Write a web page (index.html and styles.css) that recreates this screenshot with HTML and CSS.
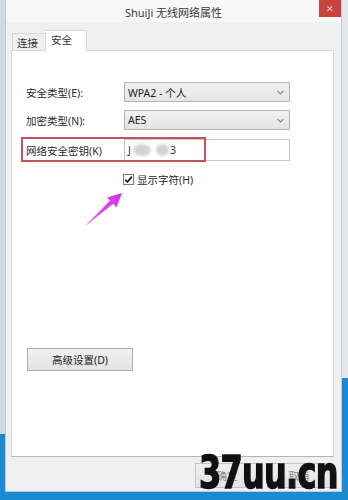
FILE: index.html
```html
<!DOCTYPE html>
<html lang="zh-CN">
<head>
    <meta charset="UTF-8">
    <meta name="viewport" content="width=device-width, initial-scale=1.0">
    <title>ShuiJi 无线网络属性</title>
    <link rel="stylesheet" href="styles.css">
</head>
<body>
    <div class="desktop">
        <div class="window">
            <div class="titlebar">
                <span class="title">ShuiJi 无线网络属性</span>
                <span class="close">&#x2715;</span>
            </div>
            <div class="tabs">
                <span class="tab">连接</span>
                <span class="tab active">安全</span>
            </div>
            <div class="panel">
                <div class="row">
                    <span class="label">安全类型(E):</span>
                    <div class="select">
                        <span>WPA2 - 个人</span>
                        <svg class="chevron" width="7" height="5" viewBox="0 0 7 5"><path d="M0.5 0.8 L3.5 3.8 L6.5 0.8" fill="none" stroke="#8a8a8a" stroke-width="1.2"/></svg>
                    </div>
                </div>
                <div class="row second">
                    <span class="label">加密类型(N):</span>
                    <div class="select">
                        <span>AES</span>
                        <svg class="chevron" width="7" height="5" viewBox="0 0 7 5"><path d="M0.5 0.8 L3.5 3.8 L6.5 0.8" fill="none" stroke="#8a8a8a" stroke-width="1.2"/></svg>
                    </div>
                </div>
                <div class="row key">
                    <span class="label">网络安全密钥(K)</span>
                    <div class="input">J<span class="blob"></span><span class="blob small"></span>3</div>
                    <span class="mark"></span>
                </div>
                <div class="check-row">
                    <span class="checkbox">
                        <svg width="9" height="9" viewBox="0 0 9 9"><path d="M1.2 4.6 L3.5 7 L7.8 1.6" fill="none" stroke="#1e1e1e" stroke-width="1.8"/></svg>
                    </span>
                    <span>显示字符(H)</span>
                </div>
                <button class="btn advanced">高级设置(D)</button>
            </div>
            <div class="footer">
                <button class="btn ok">确定</button>
                <button class="btn cancel">取消</button>
            </div>
        </div>
        <svg class="arrow" width="46" height="44" viewBox="80 188 46 44">
            <defs>
                <linearGradient id="pink" x1="0" y1="1" x2="1" y2="0">
                    <stop offset="0" stop-color="#e36cf2"/>
                    <stop offset="1" stop-color="#cf2fe3"/>
                </linearGradient>
            </defs>
            <polygon points="84,227 110,200.5 107,197.5 122,193 116.5,207.5 113.3,203.8" fill="url(#pink)"/>
        </svg>
        <div class="watermark">37uu.cn</div>
    </div>
</body>
</html>
```

FILE: styles.css
```css
* {
    box-sizing: border-box;
}

body {
    margin: 0;
    padding: 0;
    overflow: hidden;
    font-family: "Noto Sans", "Noto Sans CJK SC", sans-serif;
    font-size: 10.5px;
    color: #222;
}

.desktop {
    position: relative;
    width: 348px;
    height: 500px;
    background:
        linear-gradient(#d6d8d9, #d6d8d9) left top / 5px 434px no-repeat,
        linear-gradient(#e4e6e7, #e4e6e7) right top / 6px 378px no-repeat,
        #1b8ad2;
    padding-left: 5px;
}

.window {
    width: 337px;
    height: 492px;
    background: #f0f0f0;
    border: 1px solid #b7cde0;
    border-top: 0;
    display: flex;
    flex-direction: column;
}

.titlebar {
    height: 22px;
    background: #f8f8f8;
    display: grid;
    grid-template-columns: 22px 1fr 22px;
}

.title {
    grid-column: 2;
    text-align: center;
    line-height: 25px;
    font-size: 11px;
    color: #3a3a3a;
}

.close {
    grid-column: 3;
    height: 17px;
    background: #c9433d;
    color: #f4d6d4;
    font-size: 9px;
    text-align: center;
    line-height: 17px;
}

.tabs {
    height: 20px;
    margin-top: 8px;
    padding-left: 6px;
    display: flex;
    align-items: flex-end;
}

.tab {
    height: 17px;
    padding: 0 7px 0 4px;
    border: 1px solid #d9d9d9;
    border-bottom: 0;
    background: #f0f0f0;
    line-height: 18px;
    color: #333;
}

.tab.active {
    position: relative;
    z-index: 1;
    height: 21px;
    margin-bottom: -1px;
    padding: 0 14px 0 5px;
    background: #fff;
    border-left: 0;
    line-height: 18px;
}

.panel {
    height: 407px;
    margin: 0 7px 0 5px;
    background: #fff;
    border: 1px solid #d9d9d9;
    border-bottom-color: #b4b4b4;
    padding: 31px 0 0 14px;
    display: flex;
    flex-direction: column;
    align-items: flex-start;
}

.row {
    display: flex;
    align-items: center;
    height: 20px;
}

.row.second {
    margin-top: 8px;
}

.row.key {
    position: relative;
    height: 22px;
    margin-top: 9px;
}

.label {
    width: 98px;
    color: #2a2a2a;
}

.select {
    width: 166px;
    height: 20px;
    border: 1px solid #b3b3b3;
    background: linear-gradient(#f1f1f1, #e4e4e4);
    display: flex;
    align-items: center;
    justify-content: space-between;
    padding: 0 5px 0 3px;
    color: #222;
}

.chevron {
    display: block;
}

.input {
    width: 166px;
    height: 22px;
    border: 1px solid #c6c6c6;
    background: #fff;
    padding-left: 3px;
    display: flex;
    align-items: center;
    color: #333;
}

.blob {
    width: 18px;
    height: 12px;
    margin-left: 2px;
    border-radius: 50%;
    background: #d2d2d2;
    filter: blur(1.5px);
}

.blob.small {
    width: 13px;
    margin: 0 1px 0 5px;
}

.mark {
    position: absolute;
    left: -5px;
    top: -2px;
    width: 185px;
    height: 25px;
    border: 2px solid #c3525b;
}

.check-row {
    margin: 12px 0 0 97px;
    height: 12px;
    display: flex;
    align-items: center;
    gap: 3px;
    color: #2a2a2a;
}

.checkbox {
    width: 11px;
    height: 11px;
    border: 1px solid #6f7f93;
    background: #fff;
    display: flex;
    align-items: center;
    justify-content: center;
}

.btn {
    height: 23px;
    border: 1px solid #adadad;
    background: linear-gradient(#f0f0f0, #e3e3e3);
    font-family: "Noto Sans", "Noto Sans CJK SC", sans-serif;
    font-size: 10.5px;
    color: #222;
    padding: 0;
}

.advanced {
    width: 106px;
    margin: 163px 0 0 1px;
}

.footer {
    flex: 1;
    display: flex;
    gap: 8px;
    padding: 6px 0 0 189px;
}

.ok,
.cancel {
    width: 64px;
    height: 25px;
    color: #888;
    border-color: #c4c4c4;
}

.arrow {
    position: absolute;
    left: 80px;
    top: 188px;
}

.watermark {
    position: absolute;
    left: 199px;
    top: 447px;
    font-family: "DejaVu Sans", sans-serif;
    font-weight: bold;
    font-size: 45px;
    line-height: 52px;
    letter-spacing: -1px;
    color: #111;
    -webkit-text-stroke: 1.5px #111;
    transform: scaleX(0.71);
    transform-origin: left top;
}
```
